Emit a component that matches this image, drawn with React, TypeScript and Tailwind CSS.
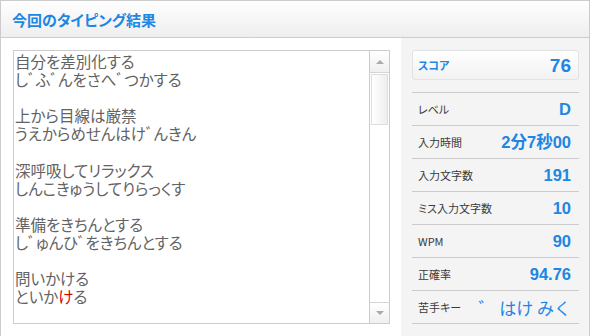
import React from "react";

const lines: React.ReactNode[] = [
  "自分を差別化する",
  "しﾞふﾞんをさへﾞつかする",
  "",
  "上から目線は厳禁",
  "うえからめせんはけﾞんきん",
  "",
  "深呼吸してリラックス",
  "しんこきゅうしてりらっくす",
  "",
  "準備をきちんとする",
  "しﾞゅんひﾞをきちんとする",
  "",
  "問いかける",
  <>
    といか<span className="text-[#e00000]">け</span>る
  </>,
];

const stats = [
  { label: "レベル", value: "D" },
  { label: "入力時間", value: "2分7秒00" },
  { label: "入力文字数", value: "191" },
  { label: "ミス入力文字数", value: "10" },
  { label: "WPM", value: "90" },
  { label: "正確率", value: "94.76" },
];

const valueCls =
  "text-[16.5px] font-bold text-[#1e86e3] leading-none font-['Liberation_Sans','Noto_Sans_CJK_JP',sans-serif]";

export default function App() {
  return (
    <div className="w-[590px] h-[336px] border-x border-t border-[#cccccc] flex flex-col bg-white font-['Noto_Sans_CJK_JP','Noto_Sans',sans-serif] [font-feature-settings:'palt']">
      <div className="h-[37px] border-b border-[#cccccc] bg-linear-to-b from-white to-[#eeeeee] flex items-center pl-[11px]">
        <h1 className="text-[15px] font-bold text-[#1e86e3] leading-none">今回のタイピング結果</h1>
      </div>

      <div className="flex flex-1">
        <div className="flex-1 bg-white pl-[12px] pr-[11px] pt-[12px]">
          <div className="h-[274px] border border-[#cccccc] flex">
            <div className="flex-1 pl-[1px] pt-[1px] text-[15.5px] leading-[18.1px] text-[#636363] overflow-hidden">
              {lines.map((l, i) => (
                <div key={i} className="h-[18.1px] whitespace-nowrap">
                  {l}
                </div>
              ))}
            </div>
            {/* scrollbar */}
            <div className="w-[20px] border-l border-[#cccccc] flex flex-col bg-white">
              <div className="h-[22px] border-b border-[#d4d4d4] bg-linear-to-b from-white to-[#f0f0f0] flex items-center justify-center">
                <div className="w-0 h-0 border-x-[4px] border-x-transparent border-b-[4px] border-b-[#aaaaaa]" />
              </div>
              <div className="mx-[1px] mt-[1px] h-[51px] border border-[#dddddd] bg-linear-to-r from-white to-[#eeeeee]" />
              <div className="flex-1" />
              <div className="h-[21px] border-t border-[#d4d4d4] bg-linear-to-b from-white to-[#f0f0f0] flex items-center justify-center">
                <div className="w-0 h-0 border-x-[4px] border-x-transparent border-t-[4px] border-t-[#aaaaaa]" />
              </div>
            </div>
          </div>
        </div>

        <div className="w-[188px] bg-[#f4f4f4] pl-[11px] pr-[10px] pt-[12px]">
          <div className="h-[30px] rounded-[3px] border border-[#e2e2e2] bg-linear-to-b from-white to-[#f2f2f2] flex items-center justify-between pl-[5px] pr-[7px]">
            <span className="text-[11px] font-bold text-[#1e86e3]">スコア</span>
            <span className="text-[19px] font-bold text-[#1e86e3] leading-none font-['Liberation_Sans',sans-serif]">76</span>
          </div>

          <div className="mt-[12px] border-t border-[#cccccc]">
            {stats.map((s) => (
              <div key={s.label} className="h-[33px] border-b border-[#cccccc] flex items-center justify-between pl-[6px] pr-[8px]">
                <span className="text-[11px] text-[#3a3a3a]">{s.label}</span>
                <span className={valueCls}>{s.value}</span>
              </div>
            ))}
            <div className="h-[33px] border-b border-[#cccccc] flex items-center justify-between pl-[6px] pr-[8px]">
              <span className="text-[11px] text-[#3a3a3a]">苦手キー</span>
              <span className="text-[17px] text-[#1e86e3] leading-none [font-feature-settings:normal]">゛ はけ みく</span>
            </div>
          </div>
        </div>
      </div>
    </div>
  );
}
